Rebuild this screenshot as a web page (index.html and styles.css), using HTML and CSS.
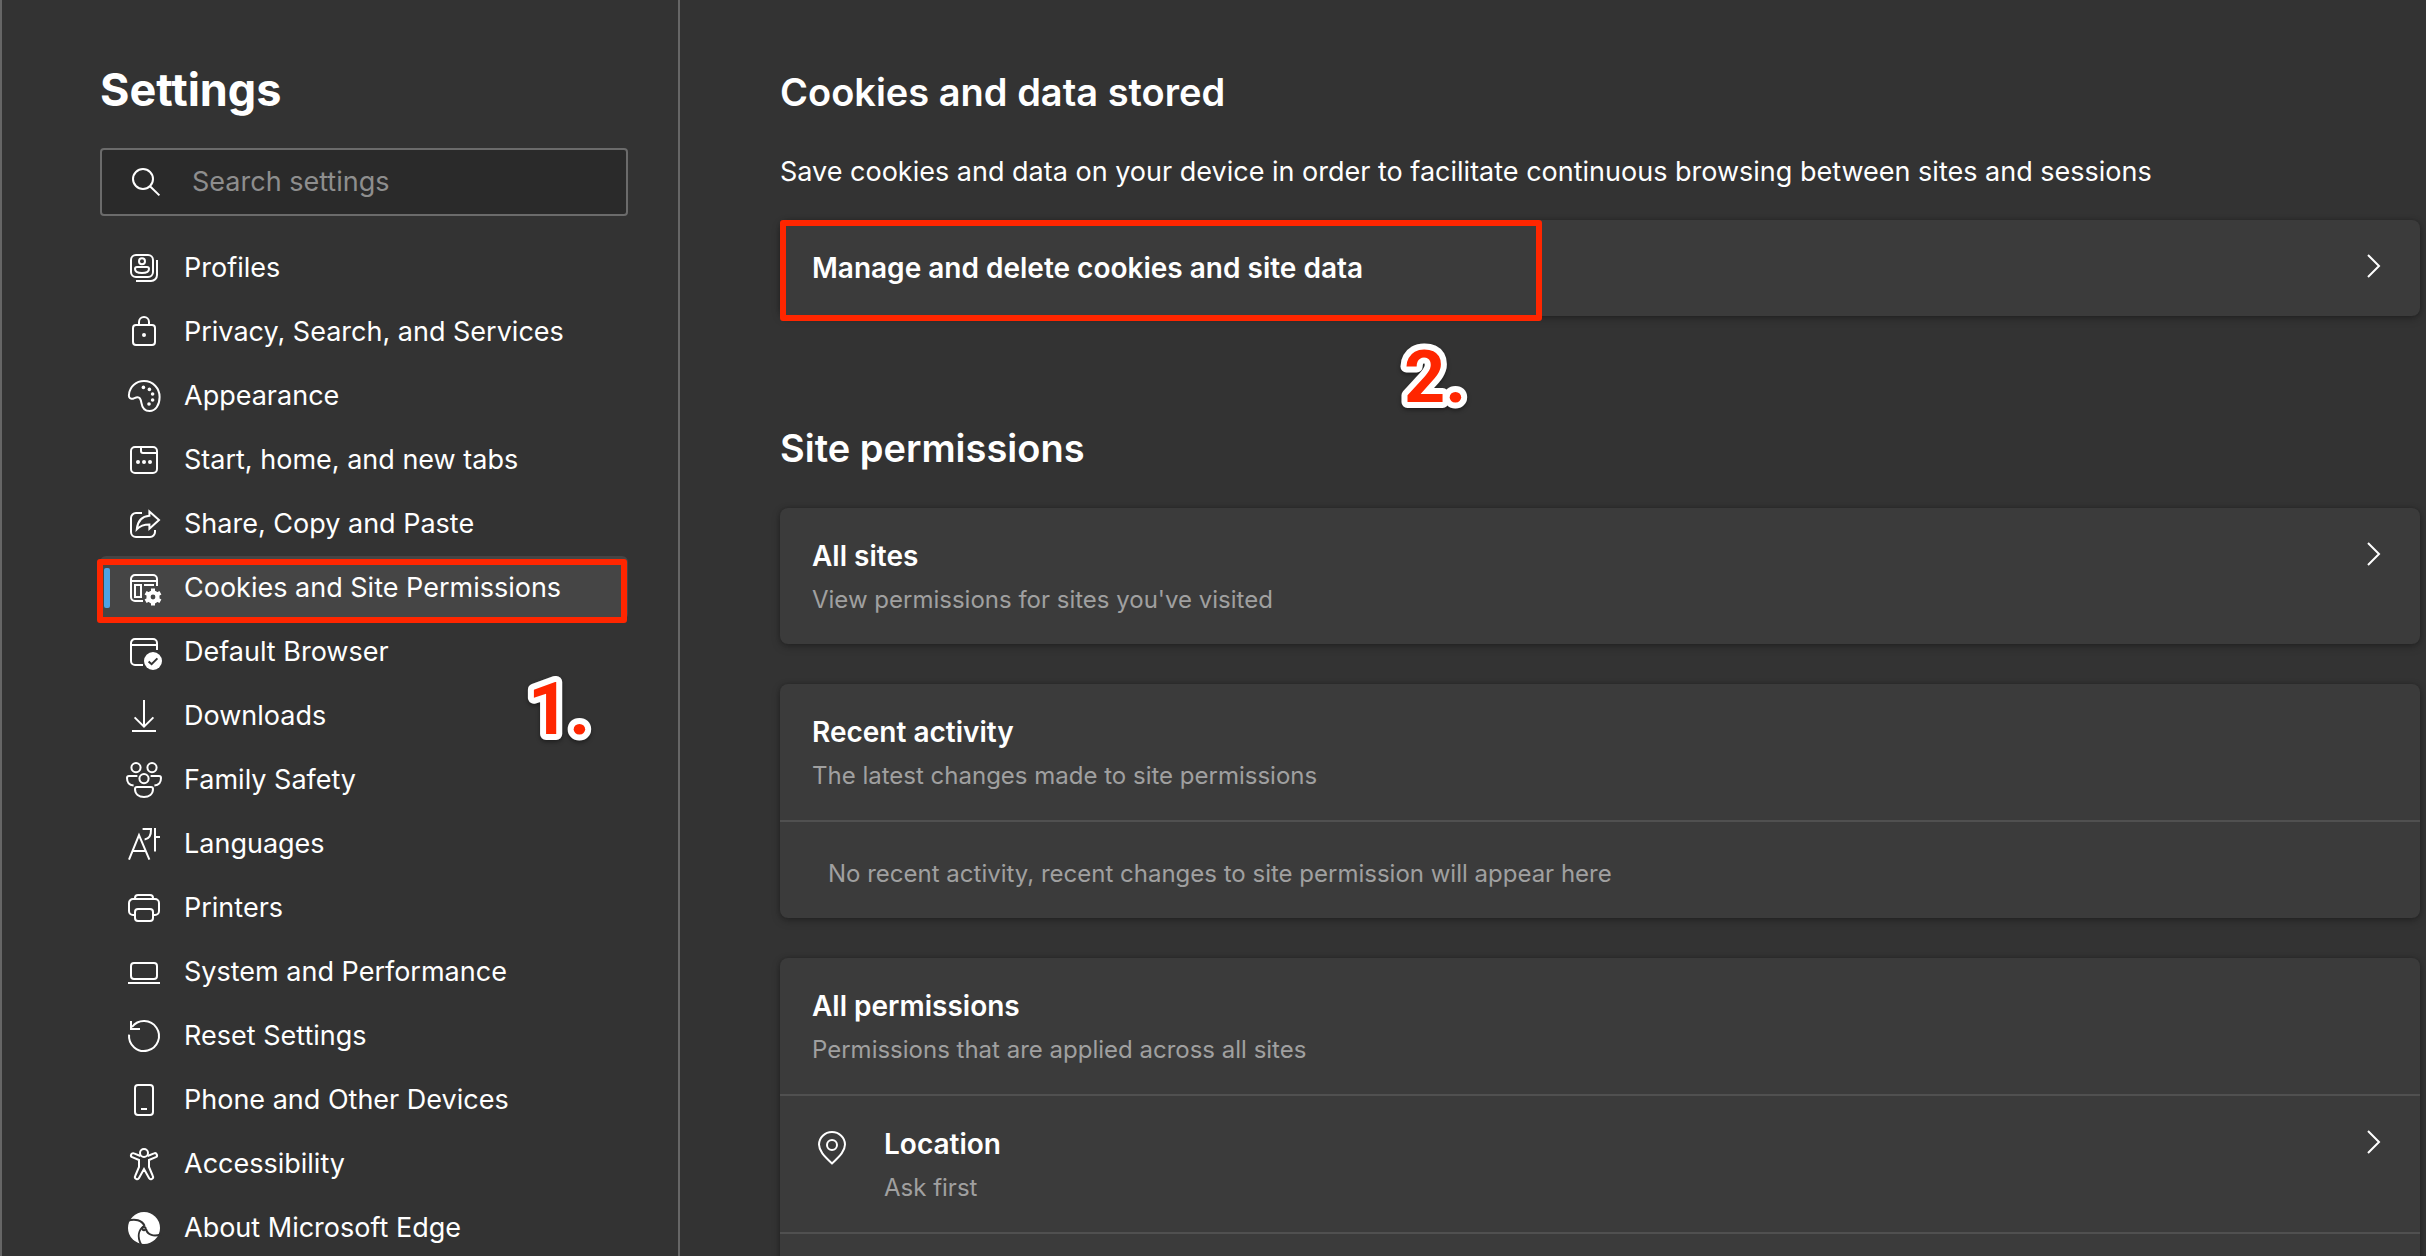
FILE: index.html
```html
<!DOCTYPE html>
<html lang="en">
<head>
<meta charset="utf-8">
<title>Settings</title>
<link rel="stylesheet" href="styles.css">
</head>
<body>
<div class="layout">
  <aside class="sidebar">
    <h1 class="sidebar-title">Settings</h1>
    <label class="search">
      <svg class="icon" viewBox="0 0 20 20" aria-hidden="true"><circle cx="9.5" cy="8.5" r="5"/><path d="M13 12.1l4.7 4.6"/></svg>
      <input class="search-input" type="search" placeholder="Search settings" aria-label="Search settings">
    </label>
    <nav class="nav">
      <a class="nav-item" href="#profiles">
        <svg class="icon" viewBox="0 0 20 20"><rect x="3.5" y="3.5" width="11" height="11" rx="2.5"/><circle cx="9" cy="6.6" r="1.5"/><path d="M5.5 10.5a1 1 0 0 1 1-1h5a1 1 0 0 1 1 1c0 1.3-1.5 2-3.5 2s-3.5-.7-3.5-2zM16.5 6v7.5a3 3 0 0 1-3 3H6"/></svg>
        Profiles</a>
      <a class="nav-item" href="#privacy">
        <svg class="icon" viewBox="0 0 20 20"><rect x="4.5" y="6.5" width="11" height="10" rx="1.5"/><path d="M7.5 6.5V5a2.500 2.500 0 0 1 5 0v1.500"/><circle class="solid" cx="10" cy="11.5" r="1"/></svg>
        Privacy, Search, and Services</a>
      <a class="nav-item" href="#appearance">
        <svg class="icon" viewBox="0 0 20 20"><path d="M2.5 9C3 5.300 6 2.500 10 2.500c4.500 0 7.800 3.600 7.800 8 0 4-2 7-5 7-2.300 0-3.700-1.600-4.100-4.100C8.400 11.300 8 10.600 6.800 10.600c-1.300 0-2 1-3.100.8C2.700 11.200 2.300 10.200 2.500 9z"/><g class="solid"><circle cx="9.700" cy="5.700" r=".9"/><circle cx="12.700" cy="6.700" r=".9"/><circle cx="14.300" cy="9" r=".9"/><circle cx="14.300" cy="12" r=".9"/><circle cx="12.500" cy="14" r=".9"/></g></svg>
        Appearance</a>
      <a class="nav-item" href="#start">
        <svg class="icon" viewBox="0 0 20 20"><rect x="3.5" y="3.5" width="13" height="13" rx="2"/><path d="M8.500 3.500v2a1 1 0 0 0 1 1h7"/><g class="solid"><circle cx="7" cy="11" r="1"/><circle cx="10" cy="11" r="1"/><circle cx="13" cy="11" r="1"/></g></svg>
        Start, home, and new tabs</a>
      <a class="nav-item" href="#share">
        <svg class="icon" viewBox="0 0 20 20"><path d="M9 4.500H6A2.500 2.500 0 0 0 3.500 7v7A2.500 2.500 0 0 0 6 16.500h7a2.500 2.500 0 0 0 2.500-2.500v-1"/><path d="M12.700 3.700L17.500 8l-4.800 4.400v-2.200c-2.600 0-4.700.7-6.300 2.400.4-3.900 2.700-6.400 6.300-6.700z"/></svg>
        Share, Copy and Paste</a>
      <a class="nav-item nav-item-current" href="#cookies" aria-current="page">
        <svg class="icon" viewBox="0 0 20 20"><path d="M9.500 16.500h-4a2 2 0 0 1-2-2v-9a2 2 0 0 1 2-2h9a2 2 0 0 1 2 2V9M3.500 6.500h13M10 8.500h5"/><rect x="5.500" y="8.500" width="3" height="6"/><g class="solid"><circle cx="14.500" cy="14.500" r="3.300"/></g><path class="teeth" d="M14.500 10.200v8.600M10.800 12.350l7.400 4.300M10.800 16.650l7.400-4.300"/><circle class="cut-selected" cx="14.500" cy="14.500" r="1.200"/></svg>
        Cookies and Site Permissions
        <span class="mark mark-nav"></span>
        <svg class="step step-one" viewBox="0 0 72 72"><text y="60">1.</text></svg></a>
      <a class="nav-item" href="#default">
        <svg class="icon" viewBox="0 0 20 20"><path d="M9.500 16.500h-4a2 2 0 0 1-2-2v-9a2 2 0 0 1 2-2h9a2 2 0 0 1 2 2V9M3.500 6.500h13"/><circle class="solid" cx="14.500" cy="14.500" r="4.500"/><path class="tick" d="M12.300 14.700l1.500 1.400 2.900-2.900"/></svg>
        Default Browser</a>
      <a class="nav-item" href="#downloads">
        <svg class="icon" viewBox="0 0 20 20"><path d="M10 2v13.300M5.300 10.700l4.700 4.600 4.700-4.600M4 17.500h12"/></svg>
        Downloads</a>
      <a class="nav-item" href="#family">
        <svg class="icon" viewBox="0 0 20 20"><circle cx="6" cy="3.800" r="2.300"/><circle cx="14" cy="3.800" r="2.300"/><circle cx="10" cy="9.300" r="2.300"/><path d="M6.700 8H2.500a1 1 0 0 0-1 1c0 2.200 1.300 3.600 3.300 3.800M13.300 8h4.200a1 1 0 0 1 1 1c0 2.200-1.300 3.600-3.300 3.800M5.500 14.500a1 1 0 0 1 1-1h7a1 1 0 0 1 1 1c0 2.600-2 4-4.500 4s-4.500-1.400-4.500-4z"/></svg>
        Family Safety</a>
      <a class="nav-item" href="#languages">
        <svg class="icon" viewBox="0 0 20 20"><path d="M2.500 17.800L7.500 5.500l5.200 12.300M4.300 13.500h6.600M9.300 2.500h4.200c.1 3-.9 5-3.200 5.200M15.500 2v11.700M15.500 6.500H18"/></svg>
        Languages</a>
      <a class="nav-item" href="#printers">
        <svg class="icon" viewBox="0 0 20 20"><path d="M5.500 13.500h-1a2 2 0 0 1-2-2v-4a2 2 0 0 1 2-2h11a2 2 0 0 1 2 2v4a2 2 0 0 1-2 2h-1M5.500 5.500V5A1.500 1.500 0 0 1 7 3.500h6A1.500 1.500 0 0 1 14.500 5v.5"/><rect x="5.500" y="10.500" width="9" height="6" rx="1.500"/></svg>
        Printers</a>
      <a class="nav-item" href="#system">
        <svg class="icon" viewBox="0 0 20 20"><rect x="3.500" y="5.500" width="13" height="8" rx="1.500"/><path d="M2 15.500h16"/></svg>
        System and Performance</a>
      <a class="nav-item" href="#reset">
        <svg class="icon" viewBox="0 0 20 20"><path d="M2.530 9.300A7.500 7.500 0 1 0 4 5.500M3.500 2.500v4H8"/></svg>
        Reset Settings</a>
      <a class="nav-item" href="#phone">
        <svg class="icon" viewBox="0 0 20 20"><rect x="5.500" y="2.500" width="9" height="15" rx="1.500"/><path d="M8.500 14.500h3"/></svg>
        Phone and Other Devices</a>
      <a class="nav-item" href="#accessibility">
        <svg class="icon" viewBox="0 0 20 20"><circle cx="10" cy="4.500" r="2"/><path d="M8.200 6L5 4.700a1 1 0 0 0-.9 1.900L7.500 8v3.500L5.600 16a1 1 0 0 0 1.900 1L10 12.500l2.500 4.500a1 1 0 0 0 1.900-1l-1.900-4.500V8l3.400-1.400a1 1 0 0 0-.9-1.900L11.800 6"/></svg>
        Accessibility</a>
      <a class="nav-item" href="#about">
        <svg class="icon" viewBox="0 0 20 20"><circle class="solid" cx="10" cy="10" r="8"/><path class="swirl" d="M1.800 6.400C5.500 5.200 9 6 10.300 9M18.500 13.100C15 14.500 11.700 13.500 11 10.500M8.600 18.400C6.500 14.500 7.200 11 10 9"/><circle class="swirl" cx="10" cy="10.300" r=".8"/></svg>
        About Microsoft Edge</a>
    </nav>
  </aside>

  <main class="content">
    <section class="section">
      <h2 class="section-title">Cookies and data stored</h2>
      <p class="section-text">Save cookies and data on your device in order to facilitate continuous browsing between sites and sessions</p>
      <div class="card">
        <a class="row" href="#manage">
          <span class="row-body"><span class="row-title">Manage and delete cookies and site data</span></span>
          <svg class="chevron" viewBox="0 0 24 36"><path d="M4 7l11 11L4 29"/></svg>
        </a>
        <span class="mark mark-card"></span>
        <svg class="step step-two" viewBox="0 0 72 72"><text y="60">2.</text></svg>
      </div>
    </section>

    <section class="section">
      <h2 class="section-title">Site permissions</h2>
      <div class="cards">
        <div class="card">
          <a class="row row-detailed" href="#all-sites">
            <span class="row-body"><span class="row-title">All sites</span><span class="row-note">View permissions for sites you've visited</span></span>
            <svg class="chevron" viewBox="0 0 24 36"><path d="M4 7l11 11L4 29"/></svg>
          </a>
        </div>
        <div class="card">
          <div class="row row-detailed">
            <div class="row-body"><h3 class="row-title">Recent activity</h3><p class="row-note">The latest changes made to site permissions</p></div>
          </div>
          <p class="row-empty">No recent activity, recent changes to site permission will appear here</p>
        </div>
        <div class="card">
          <div class="row row-detailed">
            <div class="row-body"><h3 class="row-title">All permissions</h3><p class="row-note">Permissions that are applied across all sites</p></div>
          </div>
          <a class="row row-detailed" href="#location">
            <svg class="icon row-icon" viewBox="0 0 20 20"><path d="M10 17.700C5.800 13.800 3.500 11.300 3.500 8.300a6.500 6.300 0 0 1 13 0c0 3-2.300 5.500-6.500 9.400z"/><circle cx="10" cy="8.500" r="2.500"/></svg>
            <span class="row-body"><span class="row-title">Location</span><span class="row-note">Ask first</span></span>
            <svg class="chevron" viewBox="0 0 24 36"><path d="M4 7l11 11L4 29"/></svg>
          </a>
          <div class="row"></div>
        </div>
      </div>
    </section>
  </main>
</div>
</body>
</html>
```
FILE: styles.css
```css
* { box-sizing: border-box; }

body {
  margin: 0;
  background: #333;
  color: #fff;
  font: 27px/40px Inter, "Liberation Sans", sans-serif;
}

h1, h2, h3, p { margin: 0; }
a { color: inherit; text-decoration: none; }

.layout {
  display: grid;
  grid-template-columns: 680px 1fr;
  height: 100vh;
}

.sidebar, .content {
  overflow: auto;
  scrollbar-width: none;
}

.sidebar {
  padding: 60px 50px 0 98px;
  border: solid #666;
  border-width: 0 2px;
}

.sidebar-title {
  margin-bottom: 28px;
  font-size: 45px;
  font-weight: 700;
  line-height: 60px;
}

.search {
  display: flex;
  align-items: center;
  gap: 28px;
  height: 68px;
  margin-bottom: 20px;
  padding: 0 22px;
  border: 2px solid #6b6b6b;
  border-radius: 4px;
  background: #2a2a2a;
}

.search-input {
  flex: 1;
  min-width: 0;
  padding: 0;
  border: 0;
  background: none;
  color: #fff;
  font: inherit;
}
.search-input::placeholder { color: #8e8e8e; opacity: 1; }

.icon {
  flex: none;
  width: 40px;
  height: 40px;
  overflow: visible;
  fill: none;
  stroke: #fff;
  stroke-width: 1;
}
.icon .solid { fill: #fff; stroke: none; }
.icon .teeth { stroke-width: 2; }
.icon .cut-selected { fill: #454545; stroke: none; }
.icon .tick { stroke: #333; }
.icon .swirl { stroke: #333; }

.nav-item {
  position: relative;
  display: flex;
  align-items: center;
  gap: 20px;
  height: 64px;
  padding-left: 24px;
  border-radius: 6px;
  white-space: nowrap;
}
.nav-item-current { background: #454545; }
.nav-item-current::before {
  content: "";
  position: absolute;
  top: 12px;
  left: 4px;
  width: 6px;
  height: 40px;
  border-radius: 2px;
  background: #4ea1e3;
}

.content { padding: 68px 6px 0 100px; }
.section + .section { margin-top: 108px; }
.section-title {
  margin-bottom: 36px;
  font-size: 38px;
  font-weight: 600;
  line-height: 48px;
}
.section-text { margin-bottom: 28px; }

.cards {
  display: flex;
  flex-direction: column;
  gap: 40px;
}
.card {
  position: relative;
  border-radius: 8px;
  background: #3b3b3b;
  box-shadow: 0 3px 8px rgba(0, 0, 0, .25), 0 0 4px rgba(0, 0, 0, .2);
}
.row {
  display: flex;
  align-items: flex-start;
  gap: 32px;
  min-height: 96px;
  padding: 28px 32px;
}
.row-detailed { padding-bottom: 24px; }
.row + .row, .row-empty { border-top: 2px solid #505050; }
.row-icon { margin-top: 4px; }
.row-body {
  display: flex;
  flex: 1;
  flex-direction: column;
  gap: 4px;
}
.row-title { font-size: 28px; font-weight: 600; }
.row-note, .row-empty { color: #a0a0a0; font-size: 24px; }
.row-empty { padding: 32px 48px 24px; }
.chevron {
  flex: none;
  width: 24px;
  height: 36px;
  fill: none;
  stroke: #fff;
  stroke-width: 2;
}

.mark {
  position: absolute;
  border: 6px solid #ff2600;
  border-radius: 3px;
  pointer-events: none;
}
.mark-nav { inset: 3px 1px -3px -3px; }
.mark-card { top: 0; bottom: -5px; left: 0; width: 762px; }

.step {
  position: absolute;
  width: 72px;
  height: 72px;
  overflow: visible;
  fill: #ff2600;
  stroke: #fff;
  stroke-width: 12px;
  stroke-linejoin: round;
  paint-order: stroke fill;
  font-family: Roboto, "Liberation Sans", sans-serif;
  font-size: 72px;
  font-weight: 700;
  filter: drop-shadow(0 2px 2px rgba(0, 0, 0, .4));
}
.step-one { top: 118px; left: 428px; }
.step-two { top: 122px; left: 624px; }
```
